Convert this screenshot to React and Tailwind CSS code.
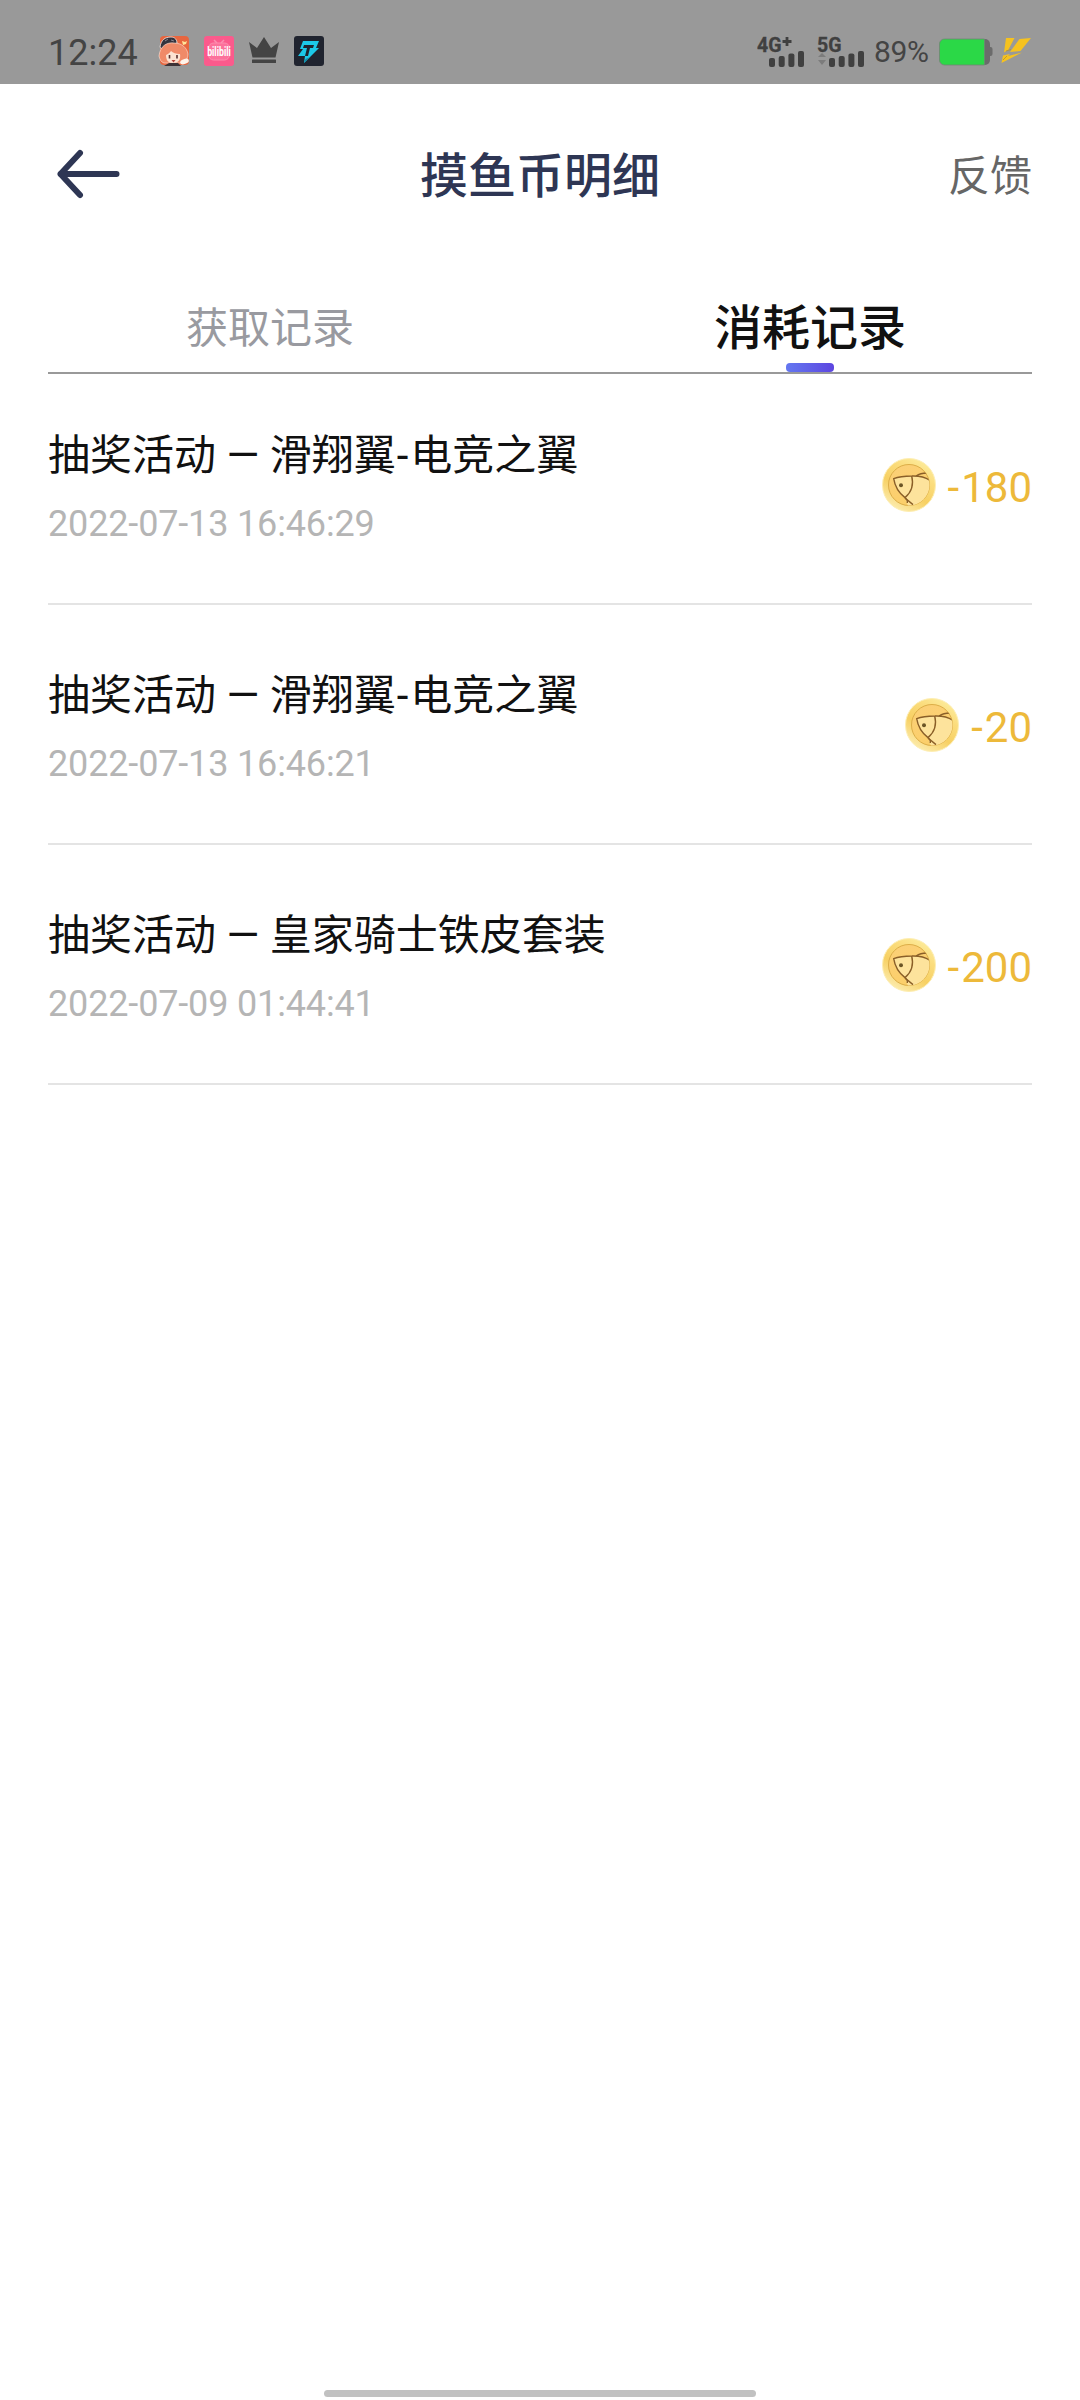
import { useState } from 'react';

const records = [
  { id: 1, title: '抽奖活动 — 滑翔翼-电竞之翼', time: '2022-07-13 16:46:29', amount: -180 },
  { id: 2, title: '抽奖活动 — 滑翔翼-电竞之翼', time: '2022-07-13 16:46:21', amount: -20 },
  { id: 3, title: '抽奖活动 — 皇家骑士铁皮套装', time: '2022-07-09 01:44:41', amount: -200 },
];

const GameIcon = () => (
  <svg width="32" height="32" viewBox="0 0 32 32">
    <rect x="2" y="1" width="29" height="29" rx="4" fill="#e8663f" />
    <path d="M2 12C3 5 7 2 13 2c4 0 6 3 6 6L4 15z" fill="#35333d" stroke="#f5ece8" strokeWidth="0.8" />
    <path d="M7 6l3-2M13 5l3 1" stroke="#8a8792" strokeWidth="1" />
    <path d="M1 21C2 11 9 7 16 8c8 0 13 5 14 11 0 4-2 7-5 9H6c-3-1-4-3-5-7z" fill="#f08a68" stroke="#fbe6dc" strokeWidth="0.6" />
    <path d="M8 20c3-1 4-3 5-4 2 2 5 3 9 3 1 6-2 9-7 9S8 25 8 20z" fill="#fce3d2" />
    <path d="M11.500 20v3.500M19 20v3.500" stroke="#57302f" strokeWidth="1.600" />
    <path d="M13.500 25h4l-2 2.500z" fill="#b84238" />
    <path d="M6 31l5-3h9l3 3z" fill="#3d3235" />
    <ellipse cx="26.500" cy="26.500" rx="4.500" ry="2.500" fill="#fff3ea" transform="rotate(-20 26.500 26.500)" />
    <path d="M24 6l3 1 2-1-1 3-3 1z" fill="#ffe49a" />
  </svg>
);

const BiliIcon = () => (
  <svg width="30" height="30" viewBox="0 0 30 30">
    <rect width="30" height="30" rx="3" fill="#fb5a8c" />
    <path d="M10 4l3 3M20 4l-3 3" stroke="#fd8eb0" strokeWidth="1.500" />
    <rect x="4.500" y="7" width="21" height="17" rx="5" fill="#fc719b" stroke="#fd8eb0" />
    <text transform="translate(15 20) scale(0.7 1)" textAnchor="middle" fontFamily="Roboto, sans-serif" fontWeight="700" fontSize="12.500" fill="#fff">bilibili</text>
  </svg>
);

const CrownIcon = () => (
  <svg width="30" height="30" viewBox="0 0 30 30" fill="#444">
    <path d="M0 6l8 6 7-11 7 11 8-6-3.500 15.500h-23z" />
    <rect x="3" y="23.500" width="24" height="3.500" rx="0.500" />
  </svg>
);

const BoltAppIcon = () => (
  <svg width="30" height="30" viewBox="0 0 30 30">
    <rect width="30" height="30" rx="3" fill="#20242f" />
    <path d="M9 5h16l-3 7h3L10 27l1-7H4l5-7H6z" fill="#1cc8e8" />
    <path d="M10 9h10l-1 3h-3l-2 8h-3l2-8H9z" fill="#20242f" />
    <path d="M10 27l1.500-4 5-2z" fill="#148ba6" />
  </svg>
);

const Signal = ({ label, plus, data }) => (
  <svg width="48" height="44" viewBox="0 -6 48 44" fill="#404040">
    <text x="0" y="17" fontFamily="Roboto, sans-serif" fontWeight="700" fontSize="19.500" stroke="#404040" strokeWidth="0.3">{label}</text>
    {plus && <path d="M25.500 6.500h9M30 2v9" stroke="#404040" strokeWidth="2.800" />}
    {data && <path d="M1 22l4-4 4 4zM1 25h8l-4 5z" fill="#7c7c7c" />}
    <rect x="12" y="23" width="6" height="9" rx="2" />
    <rect x="21.700" y="21" width="6" height="11" rx="2" />
    <rect x="31.400" y="18.500" width="6" height="13.500" rx="2" />
    <rect x="41" y="16" width="6" height="16" rx="2" />
  </svg>
);

const Battery = () => (
  <svg width="54" height="28" viewBox="0 0 54 28">
    <path d="M45 1h1a5 5 0 0 1 5 5v16a5 5 0 0 1-5 5h-1z" fill="#6b6b6b" />
    <path d="M50 9h1.500a2 2 0 0 1 2 2v5a2 2 0 0 1-2 2H50z" fill="#6b6b6b" />
    <path d="M5.500 1H45.500v26H5.500a5 5 0 0 1-5-5V6a5 5 0 0 1 5-5z" fill="#2bd847" stroke="#6f8573" strokeWidth="0.8" />
  </svg>
);

const ChargeIcon = () => (
  <svg width="32" height="26" viewBox="0 0 32 26" fill="#f6c21f">
    <path d="M6 0h8.500L8.500 11.500 4 14.500z" />
    <path d="M19.500 1L31 0 20.500 13l-10.500 1z" />
    <path d="M3 17.500l7-1.500-2 2 14-3.500L1.500 25z" />
    <path d="M6 13l5-1.500M3 22l4-4" stroke="#b5922f" strokeWidth="0.8" />
  </svg>
);

const StatusBar = () => (
  <div className="flex h-[84px] shrink-0 items-center justify-between bg-[#999999] pt-[18px] pr-12 pl-12">
    <div className="flex items-center">
      <span className="w-[110px] pt-[3px] text-[36px] leading-[44px] text-[#444444]">12:24</span>
      <div className="flex items-center gap-[15px]">
        <div className="-mr-[1px]"><GameIcon /></div>
        <BiliIcon />
        <CrownIcon />
        <BoltAppIcon />
      </div>
    </div>
    <div className="flex items-center">
      <Signal label="4G" plus />
      <div className="ml-3"><Signal label="5G" data /></div>
      <span className="ml-[9px] w-[56px] pt-[2px] text-[30px] leading-[40px] tracking-[-0.3px] text-[#444444]">89%</span>
      <div className="ml-[9px] pt-[2px]"><Battery /></div>
      <div className="ml-[7px]"><ChargeIcon /></div>
    </div>
  </div>
);

const CoinIcon = () => (
  <svg width="54" height="54" viewBox="0 0 54 54">
    <defs>
      <linearGradient id="coinRim" x1="0.8" y1="0" x2="0.2" y2="1">
        <stop offset="0" stopColor="#fdeea0" />
        <stop offset="0.3" stopColor="#fbdc7c" />
        <stop offset="0.6" stopColor="#f7d063" />
        <stop offset="1" stopColor="#fdf0b8" />
      </linearGradient>
      <linearGradient id="coinFace" x1="0" y1="0" x2="0.4" y2="1">
        <stop offset="0" stopColor="#fcd078" />
        <stop offset="1" stopColor="#fbcf6a" />
      </linearGradient>
      <clipPath id="coinClip"><circle cx="27" cy="27" r="20.500" /></clipPath>
    </defs>
    <circle cx="27" cy="27" r="26.500" fill="url(#coinRim)" stroke="#fdeeb4" strokeWidth="1" />
    <circle cx="27" cy="27" r="20.500" fill="url(#coinFace)" stroke="#dcae48" strokeWidth="1" />
    <g clipPath="url(#coinClip)" fill="none" stroke="#8a5f28" strokeWidth="1.400">
      <path d="M11.700 20.600C17 18.500 23 18 30 18c6 0 13 1 18 4.300V48H26l-3-8.400C18 36 13 30 11.700 20.600z" fill="#fde39c" stroke="none" />
      <path d="M25.300 45v-2.500L23 39.600C17 35 13 29 11.700 20.600 17 18.500 23 18 30 18c7-.2 13 1 17.700 4.300M34 18c3-2 6-3 11-3" />
      <path d="M29.700 18c2 8 0 16-6.700 21.600M23 40l8 6.600" />
    </g>
    <circle cx="19" cy="27.300" r="2" fill="#6b5526" />
  </svg>
);

const RecordItem = ({ record }) => {
  const [name, detail] = record.title.split('-');

  return (
    <li className="flex h-[240px] items-start justify-between border-b-2 border-[#e4e4e4]">
      <div className="pt-[61px]">
        <p className="text-[42px] leading-[60px] text-[#111111]">
          {name}
          {detail && <span className="mr-[2px] ml-[1px]">-</span>}
          {detail}
        </p>
        <p className="mt-[17px] text-[36px] leading-[42px] tracking-[-0.15px] text-[#b5b5b5]">{record.time}</p>
      </div>
      <div className="flex items-start gap-3 pt-[93px] text-[#edb93a]">
        <CoinIcon />
        <span className="pt-[3px] text-[42px] leading-[54px]">
          <span className="mr-[2px]">-</span>
          {Math.abs(record.amount)}
        </span>
      </div>
    </li>
  );
};

const App = () => {
  const [tab, setTab] = useState('spend');

  const tabs = [
    { key: 'gain', label: '获取记录' },
    { key: 'spend', label: '消耗记录' },
  ];

  return (
    <div className="flex h-[2400px] w-[1080px] flex-col overflow-hidden bg-white font-['Roboto','Noto_Sans_CJK_SC',sans-serif]">
      <StatusBar />

      <header className="grid h-[180px] shrink-0 grid-cols-3 items-center px-12">
        <button className="pl-2" aria-label="返回">
          <svg width="66" height="52" viewBox="0 0 66 52" fill="none" stroke="#2e3654" strokeWidth="6" strokeLinecap="round" strokeLinejoin="round">
            <path d="M60.500 26H4.500M24 5L4.500 26 24 47" />
          </svg>
        </button>
        <h1 className="pt-[5px] text-center text-[48px] font-medium text-[#2e3654]">摸鱼币明细</h1>
        <button className="pt-[5px] text-right text-[42px] text-[#666666]">反馈</button>
      </header>

      {/* Tabs */}
      <nav className="flex h-[108px] shrink-0">
        {tabs.map((item) => (
          <button
            key={item.key}
            onClick={() => setTab(item.key)}
            className="flex flex-1 flex-col items-center justify-between"
          >
            <span
              className={
                tab === item.key
                  ? 'h-[99px] pt-[30px] text-[48px] leading-[70px] font-medium text-[#111111]'
                  : 'pt-[30px] text-[42px] leading-[70px] text-[#999aa0]'
              }
            >
              {item.label}
            </span>
            {tab === item.key && <i className="h-[9px] w-12 rounded-[4px] bg-linear-to-r from-[#6477f0] to-[#5d45e0]" />}
          </button>
        ))}
      </nav>
      <div className="mx-12 h-[2px] shrink-0 bg-[#999999]" />

      <ul className="-mt-[9px] flex-1 px-12">
        {records.map((record) => (
          <RecordItem key={record.id} record={record} />
        ))}
      </ul>

      <div className="mx-auto mb-[3px] h-[7px] w-[432px] shrink-0 rounded-full bg-[#c1c1c1]" />
    </div>
  );
};

export default App;
